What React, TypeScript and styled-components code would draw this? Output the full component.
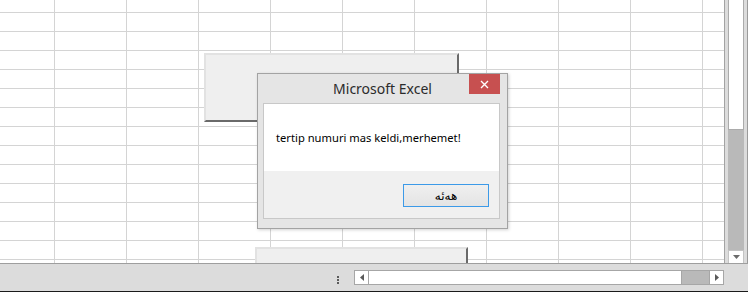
import React from 'react';
import styled, { createGlobalStyle } from 'styled-components';

const GlobalStyle = createGlobalStyle`
  html, body {
    margin: 0;
    padding: 0;
    background: #ffffff;
  }
  body {
    font-family: 'Noto Sans', 'Liberation Sans', sans-serif;
  }
  * {
    box-sizing: border-box;
  }
`;

const COLS = 11;
const ROWS = 15;

export default function App() {
  const cells = [];
  for (let r = 0; r < ROWS; r++) {
    for (let c = 0; c < COLS; c++) {
      cells.push(<Cell key={`${r}-${c}`} $lastCol={c === COLS - 1} $lastRow={r === ROWS - 1} />);
    }
  }

  return (
    <Window>
      <GlobalStyle />
      <MainArea>
        <Sheet>{cells}</Sheet>
        <VScroll>
          <VTrack>
            <VThumb />
            <VArrowButton>
              <svg width='7' height='4' viewBox='0 0 7 4'>
                <polygon points='0,0 7,0 3.5,4' fill='#6b6b6b' />
              </svg>
            </VArrowButton>
          </VTrack>
        </VScroll>
      </MainArea>

      <BottomBar>
        <Dots>
          <span />
          <span />
          <span />
        </Dots>
        <HScroll>
          <HArrowButton>
            <svg width='4' height='7' viewBox='0 0 4 7'>
              <polygon points='4,0 4,7 0,3.5' fill='#5a5a5a' />
            </svg>
          </HArrowButton>
          <HThumb />
          <HTrack />
          <HArrowButton>
            <svg width='4' height='7' viewBox='0 0 4 7'>
              <polygon points='0,0 0,7 4,3.5' fill='#5a5a5a' />
            </svg>
          </HArrowButton>
        </HScroll>
      </BottomBar>

      <SheetShape $left={204} $top={53} $width={255} $height={69} />
      <SheetShape $left={255} $top={247} $width={213} $height={30} />

      <Dialog>
        <TitleBar>
          <Title>Microsoft Excel</Title>
          <CloseButton>
            <svg width='9' height='9' viewBox='0 0 9 9'>
              <path d='M1 1 L8 8 M8 1 L1 8' stroke='#ffffff' strokeWidth='1.4' />
            </svg>
          </CloseButton>
        </TitleBar>
        <DialogBody>
          <MessageArea>
            <Message>tertip numuri mas keldi,merhemet!</Message>
          </MessageArea>
          <ButtonArea>
            <OkButton>هەئە</OkButton>
          </ButtonArea>
        </DialogBody>
      </Dialog>
    </Window>
  );
}

const Window = styled.div`
  position: relative;
  width: 748px;
  height: 292px;
  display: flex;
  flex-direction: column;
  overflow: hidden;
  background: #ffffff;
`;

const MainArea = styled.div`
  display: flex;
  height: 263px;
`;

const Sheet = styled.div`
  width: 724px;
  height: 263px;
  display: grid;
  grid-template-columns: 55px repeat(9, 72px) 1fr;
  grid-template-rows: 13px repeat(13, 19px) 1fr;
  background: #ffffff;
`;

const Cell = styled.div<{ $lastCol: boolean; $lastRow: boolean }>`
  border-right: ${({ $lastCol }) => ($lastCol ? 'none' : '1px solid #d4d4d4')};
  border-bottom: ${({ $lastRow }) => ($lastRow ? 'none' : '1px solid #d4d4d4')};
`;

const VScroll = styled.div`
  width: 24px;
  height: 263px;
  background: #dcdcdc;
  border-left: 1px solid #a3a3a3;
  border-right: 1px solid #9a9a9a;
  padding: 0 3px 0 3px;
`;

const VTrack = styled.div`
  width: 16px;
  height: 100%;
  background: #b9b9b9;
  display: flex;
  flex-direction: column;
  justify-content: space-between;
`;

const VThumb = styled.div`
  height: 130px;
  background: #ffffff;
  border: 1px solid #ababab;
  border-top: none;
`;

const VArrowButton = styled.div`
  height: 13px;
  background: #ffffff;
  border: 1px solid #c4c4c4;
  border-bottom: none;
  display: flex;
  align-items: center;
  justify-content: center;
`;

const BottomBar = styled.div`
  position: relative;
  z-index: 2;
  height: 29px;
  background: #dcdcdc;
  border-top: 1px solid #9e9e9e;
  border-bottom: 1px solid #1a1a1a;
  display: flex;
  align-items: flex-start;
  padding-top: 6px;
`;

const Dots = styled.div`
  margin: 6px 0 0 337px;
  width: 2px;
  display: flex;
  flex-direction: column;
  gap: 1px;

  span {
    width: 2px;
    height: 2px;
    background: #5b5b5b;
  }
`;

const HScroll = styled.div`
  margin-left: 15px;
  width: 370px;
  height: 15px;
  display: flex;
  border-top: 1px solid #a6a6a6;
  border-bottom: 1px solid #a6a6a6;
  background: #b9b9b9;
`;

const HArrowButton = styled.div`
  width: 15px;
  background: #ffffff;
  border-left: 1px solid #a6a6a6;
  border-right: 1px solid #a6a6a6;
  display: flex;
  align-items: center;
  justify-content: center;
  flex-shrink: 0;
`;

const HThumb = styled.div`
  width: 313px;
  background: #ffffff;
  border-right: 1px solid #a6a6a6;
`;

const HTrack = styled.div`
  flex: 1;
  background: #b9b9b9;
`;

const SheetShape = styled.div<{ $left: number; $top: number; $width: number; $height: number }>`
  position: absolute;
  left: ${({ $left }) => $left}px;
  top: ${({ $top }) => $top}px;
  width: ${({ $width }) => $width}px;
  height: ${({ $height }) => $height}px;
  background: #efefef;
  border-top: 2px solid #e2e2e2;
  border-left: 2px solid #e2e2e2;
  border-right: 2px solid #6a6a6a;
  border-bottom: 2px solid #6a6a6a;
  z-index: 1;
`;

const Dialog = styled.div`
  position: absolute;
  left: 257px;
  top: 73px;
  width: 251px;
  height: 156px;
  background: #e5e5e5;
  border: 1px solid #a3a3a3;
  box-shadow: 1px 1px 3px rgba(0, 0, 0, 0.18);
  display: flex;
  flex-direction: column;
  z-index: 3;
`;

const TitleBar = styled.div`
  position: relative;
  height: 29px;
  display: flex;
  align-items: center;
  justify-content: center;
`;

const Title = styled.div`
  font-family: 'Noto Sans', 'Liberation Sans', sans-serif;
  font-size: 14px;
  color: #2b2b2b;
  margin-top: -1px;
`;

const CloseButton = styled.div`
  position: absolute;
  top: 0;
  right: 7px;
  width: 31px;
  height: 20px;
  background: #c75050;
  display: flex;
  align-items: center;
  justify-content: center;
`;

const DialogBody = styled.div`
  margin: 0 7px 9px 5px;
  flex: 1;
  border: 1px solid #c8c8c8;
  display: flex;
  flex-direction: column;
`;

const MessageArea = styled.div`
  height: 67px;
  background: #ffffff;
  padding: 26px 0 0 12px;
`;

const Message = styled.div`
  font-family: 'Noto Sans', 'Liberation Sans', sans-serif;
  font-size: 11.2px;
  color: #000000;
  line-height: 16px;
`;

const ButtonArea = styled.div`
  flex: 1;
  background: #f0f0f0;
  display: flex;
  justify-content: flex-end;
  align-items: flex-start;
  padding: 13px 10px 0 0;
`;

const OkButton = styled.div`
  width: 86px;
  height: 23px;
  border: 1px solid #3c9ae8;
  background: linear-gradient(#efefef, #e4e4e4);
  font-family: 'DejaVu Sans', sans-serif;
  font-size: 12px;
  color: #000000;
  display: flex;
  align-items: center;
  justify-content: center;
`;
